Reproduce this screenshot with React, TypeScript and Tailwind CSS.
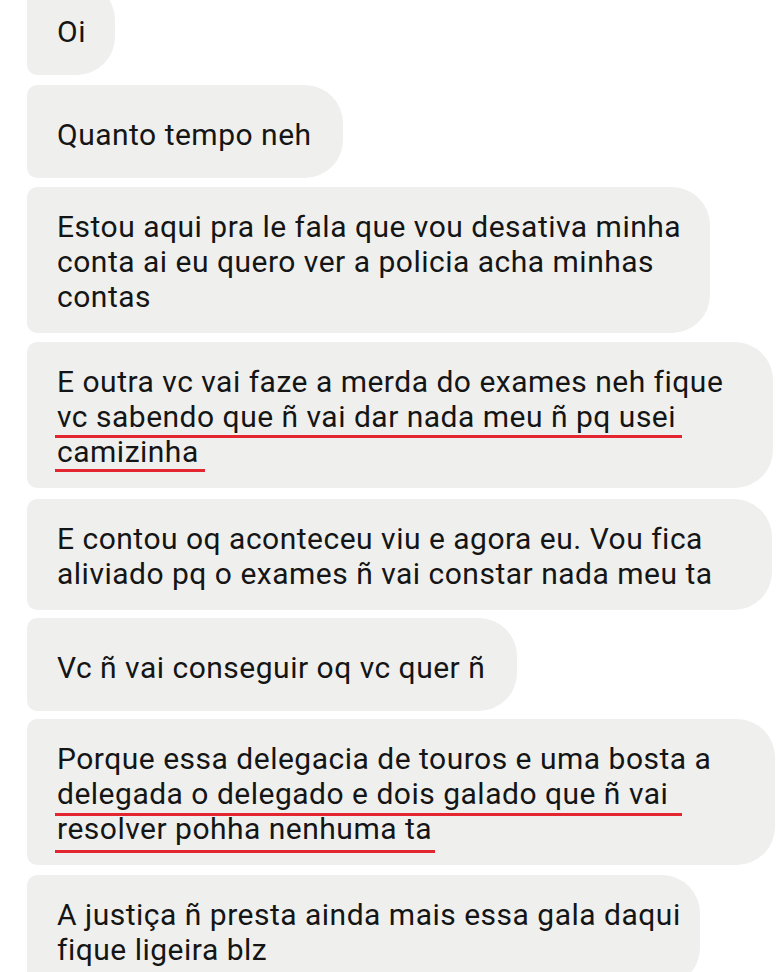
import React from "react";

type Line = { text: string; ul?: string };
type Bubble = { cls: string; single?: boolean; lines: Line[] };

const bubbles: Bubble[] = [
  { cls: "w-[88px] -mt-[18px]", single: true, lines: [{ text: "Oi" }] },
  { cls: "w-[316px] mt-[10px]", single: true, lines: [{ text: "Quanto tempo neh" }] },
  {
    cls: "w-[683px] mt-[9px]",
    lines: [
      { text: "Estou aqui pra le fala que vou desativa minha" },
      { text: "conta ai eu quero ver a policia acha minhas" },
      { text: "contas" },
    ],
  },
  {
    cls: "w-[746px] mt-[9px]",
    lines: [
      { text: "E outra vc vai faze a merda do exames neh fique" },
      { text: "vc sabendo que ñ vai dar nada meu ñ pq usei", ul: "w-[627px] top-[36px]" },
      { text: "camizinha", ul: "w-[150px] top-[35px]" },
    ],
  },
  {
    cls: "w-[745px] mt-[11px]",
    lines: [
      { text: "E contou oq aconteceu viu e agora eu. Vou fica" },
      { text: "aliviado pq o exames ñ vai constar nada meu ta" },
    ],
  },
  { cls: "w-[490px] mt-[8px]", single: true, lines: [{ text: "Vc ñ vai conseguir oq vc quer ñ" }] },
  {
    cls: "w-[748px] mt-[8px]",
    lines: [
      { text: "Porque essa delegacia de touros e uma bosta a" },
      { text: "delegada o delegado e dois galado que ñ vai", ul: "w-[627px] top-[37px]" },
      { text: "resolver pohha nenhuma ta", ul: "w-[380px] top-[39px]" },
    ],
  },
  {
    cls: "w-[673px] mt-[10px]",
    lines: [
      { text: "A justiça ñ presta ainda mais essa gala daqui" },
      { text: "fique ligeira blz" },
    ],
  },
];

export default function App() {
  return (
    <div className="flex h-[972px] w-[782px] flex-col items-start overflow-hidden bg-white pl-[27px] font-['Roboto','Noto_Sans',sans-serif]">
      {bubbles.map((b, i) => (
        <div
          key={i}
          className={
            "shrink-0 rounded-l-[10px] rounded-r-[38px] bg-[#eff0ee] pl-[30px] text-[30px] leading-[35px] tracking-[0.5px] text-[#151515] " +
            b.cls +
            " " +
            (b.single ? "pt-[32px] pb-[26px]" : "pt-[22px] pb-[19px]")
          }
        >
          {b.lines.map((l, j) => (
            <div key={j} className="relative whitespace-nowrap">
              {l.text}
              {l.ul && (
                <div className={"absolute left-[-2px] h-[3px] bg-[#e3262f] " + l.ul} />
              )}
            </div>
          ))}
        </div>
      ))}
    </div>
  );
}
